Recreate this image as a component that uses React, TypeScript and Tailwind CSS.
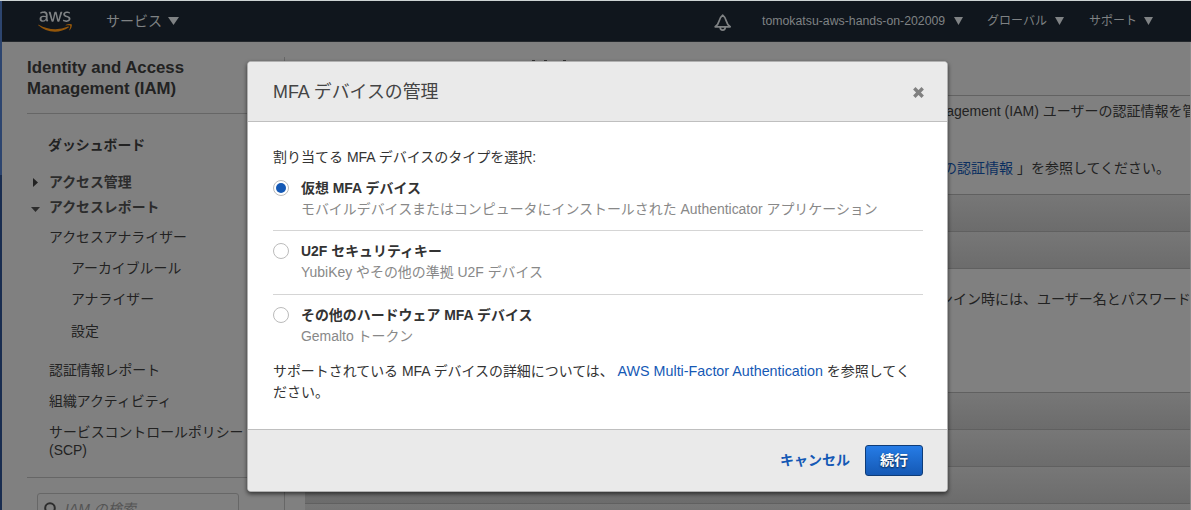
import React from "react";
import { FaAws } from "react-icons/fa";

function Caret({ className = "" }: { className?: string }) {
  return (
    <svg viewBox="0 0 10 8" preserveAspectRatio="none" className={`shrink-0 ${className}`}>
      <path d="M0 0H10L5 8Z" fill="currentColor" />
    </svg>
  );
}

function Bell() {
  return (
    <svg viewBox="0 0 18 18" className="mt-[3px] h-[18px] w-[18px]" fill="none" stroke="currentColor" strokeWidth="1.7">
      <path d="M1.2 12.8C4 10.8 4.4 9.6 5 7.2C5.6 4.6 6.4 3 8.7 1.2C11 3 11.8 4.6 12.4 7.2C13 9.6 13.4 10.8 16.2 12.8Z" strokeLinejoin="round" />
      <path d="M6.2 13v.6a2.5 2.5 0 0 0 5 0V13" />
    </svg>
  );
}

function TopNav() {
  return (
    <header className="flex h-[41px] shrink-0 items-center border-b border-[#24282d] bg-[#10161d] text-[13px] text-[#7f8284]">
      <svg width="0" height="0" className="absolute">
        <defs>
          <linearGradient id="logo" gradientUnits="userSpaceOnUse" x1="0" y1="64" x2="0" y2="448">
            <stop offset="0.57" stopColor="#7f8284" />
            <stop offset="0.57" stopColor="#945609" />
          </linearGradient>
        </defs>
      </svg>
      <FaAws fill="url(#logo)" className="ml-[36px] h-[27px] w-[34px]" />
      <span className="ml-[34px] w-[56px] whitespace-nowrap text-[14px]">サービス</span>
      <Caret className="ml-[6px] h-[8px] w-[11px]" />
      <div className="ml-[535px] w-[18px]"><Bell /></div>
      <span className="ml-[30px] w-[185px] whitespace-nowrap text-[12.3px]">tomokatsu-aws-hands-on-202009</span>
      <Caret className="ml-[7px] h-[8px] w-[9px]" />
      <span className="ml-[24px] w-[61px] whitespace-nowrap text-[12px]">グローバル</span>
      <Caret className="ml-[7px] h-[8px] w-[9px]" />
      <span className="ml-[25px] w-[48px] whitespace-nowrap text-[12px]">サポート</span>
      <Caret className="ml-[7px] h-[8px] w-[9px]" />
    </header>
  );
}

function Sidebar() {
  return (
    <aside className="mt-[15px] w-[283px] shrink-0 border-r border-[#676767] pl-[25px]">
      <h2 className="text-[16.8px] leading-[21px] font-bold whitespace-nowrap text-[#222]">
        Identity and Access<br />Management (IAM)
      </h2>
      <div className="mt-[14px] w-[235px] border-t border-[#666]" />
      <nav className="whitespace-nowrap pl-[22px] text-[13.9px] leading-[20px] text-[#222]">
        <div className="mt-[21px] -ml-[1px] font-bold">ダッシュボード</div>
        <div className="mt-[17px] -ml-[17px] flex items-center font-bold text-[#2c2c2c]">
          <svg viewBox="0 0 5 9" className="ml-[1px] mr-[11px] h-[9px] w-[5px]"><path d="M0 0L5 4.5L0 9Z" fill="#222" /></svg>
          アクセス管理
        </div>
        <div className="mt-[5px] -ml-[18px] flex items-center font-bold text-[#2c2c2c]">
          <Caret className="mt-[4px] mr-[9px] h-[5px] w-[9px]" />
          アクセスレポート
        </div>
        <div className="mt-[10px]">アクセスアナライザー</div>
        <div className="mt-[11px] pl-[22px]">アーカイブルール</div>
        <div className="mt-[11px] pl-[22px]">アナライザー</div>
        <div className="mt-[12px] pl-[22px]">設定</div>
        <div className="mt-[19px]">認証情報レポート</div>
        <div className="mt-[11px]">組織アクティビティ</div>
        <div className="mt-[11px]">サービスコントロールポリシー</div>
        <div className="-mt-[2px]">(SCP)</div>
      </nav>
      <div className="mt-[17px] w-[235px] border-t border-[#666]" />
      <div className="mt-[15px] ml-[10px] flex h-[32px] w-[202px] items-center rounded-[3px] border border-[#676767] pl-[6px] text-[14px] text-[#545454] italic">
        <svg viewBox="0 0 14 14" className="mr-[7px] h-[14px] w-[14px] text-[#2c2c2c]" fill="none" stroke="currentColor" strokeWidth="2">
          <circle cx="6" cy="6" r="4.8" />
          <path d="M9.5 9.5L13 13" />
        </svg>
        IAM の検索
      </div>
    </aside>
  );
}

function Bar() {
  return <div className="h-[37px] border-t border-[#606060] bg-linear-to-b from-[#777] to-[#6c6c6c]" />;
}

function Content() {
  return (
    <main className="ml-[20px] min-w-0 flex-1 overflow-hidden border-r border-[#8c8c8c] text-[14px] leading-[20px] whitespace-nowrap text-[#222]">
      <div className="flex h-[19px] items-end pl-[227px]">
        <i className="h-[1px] w-[3px] bg-[#333]" />
        <i className="ml-[9px] h-[1px] w-[3px] bg-[#333]" />
        <i className="ml-[16px] h-[1px] w-[3px] bg-[#333]" />
      </div>
      <div className="mt-[34px] border-t border-[#626262]" />
      <p className="mt-[5px] pl-[614px]">Management (IAM) ユーザーの認証情報を管</p>
      <p className="mt-[37px] pl-[638px]"><span className="text-[#0b2f60]">の認証情報</span> 」を参照してください。</p>
      <div className="mt-[16px] border-b border-[#606060]">
        <Bar />
        <Bar />
      </div>
      <p className="mt-[20px] pl-[634px]">ンイン時には、ユーザー名とパスワード</p>
      <div className="mt-[83px]">
        <Bar />
        <Bar />
        <Bar />
        <Bar />
      </div>
    </main>
  );
}

function Option({ title, hint, checked = false, className = "" }: { title: string; hint: string; checked?: boolean; className?: string }) {
  return (
    <label className={`flex ${className}`}>
      <span className="mt-[2px] mr-[12px] flex h-[16px] w-[16px] shrink-0 items-center justify-center rounded-full border border-[#bbb] bg-white">
        {checked && <span className="h-[10px] w-[10px] rounded-full bg-[#1559b5]" />}
      </span>
      <span className="text-[13.95px] leading-[21px] whitespace-nowrap">
        <b className="block text-[#333]">{title}</b>
        <span className="block text-[#888]">{hint}</span>
      </span>
    </label>
  );
}

function Modal() {
  return (
    <section className="absolute top-[61px] left-[247px] flex h-[431px] w-[701px] flex-col overflow-hidden rounded-[4px] border border-[#b0b0b0] bg-white text-[14px] text-[#333] shadow-[0_2px_4px_rgba(0,0,0,0.6)]">
      <div className="flex h-[60px] shrink-0 items-center justify-between border-b border-[#bfbfbf] bg-[#eaeaea] pr-[23px] pl-[25px]">
        <h1 className="mt-[2px] text-[17.9px] text-[#444]">MFA デバイスの管理</h1>
        <svg viewBox="0 0 11 11" className="mt-[2px] h-[11px] w-[11px]" stroke="#808080" strokeWidth="3.4">
          <path d="M1.3 1.3L9.7 9.7M9.7 1.3L1.3 9.7" />
        </svg>
      </div>
      <div className="flex-1 pt-[25px] pr-[24px] pl-[25px]">
        <p className="leading-[20px] whitespace-nowrap">割り当てる MFA デバイスのタイプを選択:</p>
        <Option className="mt-[11px] h-[53px] border-b border-[#d5d5d5]" checked title="仮想 MFA デバイス" hint="モバイルデバイスまたはコンピュータにインストールされた Authenticator アプリケーション" />
        <Option className="h-[64px] border-b border-[#d5d5d5] pt-[10px]" title="U2F セキュリティキー" hint="YubiKey やその他の準拠 U2F デバイス" />
        <Option className="h-[66px] pt-[10px]" title="その他のハードウェア MFA デバイス" hint="Gemalto トークン" />
        <p className="leading-[21px] whitespace-nowrap">
          <span className="text-[13.95px]">サポートされている MFA デバイスの詳細については、 </span><a className="text-[14.3px] text-[#1559b5]">AWS Multi-Factor Authentication</a> を参照してく<br />ださい。
        </p>
      </div>
      <div className="flex h-[62px] shrink-0 items-center justify-end border-t border-[#bfbfbf] bg-[#eaeaea] pr-[24px]">
        <button className="mr-[15px] font-bold whitespace-nowrap text-[#1559b5]">キャンセル</button>
        <button className="h-[31px] w-[58px] rounded-[3px] border border-[#0e3c78] bg-linear-to-b from-[#267ce6] to-[#1559b5] font-bold text-white [text-shadow:0_1px_2px_rgba(0,0,0,0.7)]">続行</button>
      </div>
    </section>
  );
}

export default function App() {
  return (
    <div className="relative flex h-[510px] w-[1191px] flex-col overflow-hidden bg-[#808080] font-['Liberation_Sans','Noto_Sans_CJK_JP',sans-serif]">
      <div className="h-px shrink-0 bg-[#cdd3d3]" />
      <div className="flex min-h-0 flex-1">
        <div className="flex w-[2px] shrink-0 flex-col">
          <div className="h-[174px] bg-[#2d456f]" />
          <div className="flex-1 bg-[#192d50]" />
        </div>
        <div className="flex min-w-0 flex-1 flex-col">
          <TopNav />
          <div className="flex min-h-0 flex-1">
            <Sidebar />
            <Content />
          </div>
        </div>
      </div>
      <Modal />
    </div>
  );
}
